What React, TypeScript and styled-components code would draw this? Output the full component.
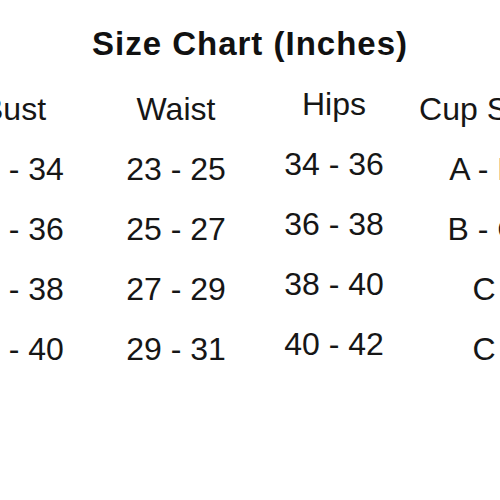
import React from "react";
import styled, { createGlobalStyle } from "styled-components";

const GlobalStyle = createGlobalStyle`
  html, body {
    margin: 0;
    padding: 0;
    background: #ffffff;
    overflow: hidden;
  }
  body {
    font-family: "Liberation Sans", Arial, sans-serif;
    color: #161616;
  }
`;

const Page = styled.div`
  width: 500px;
  height: 500px;
  display: flex;
  flex-direction: column;
  align-items: flex-start;
`;

const Title = styled.h1`
  align-self: stretch;
  margin: 24px 0 0;
  font-size: 33px;
  line-height: 40px;
  font-weight: 700;
  letter-spacing: 1px;
  text-align: center;
  color: #111;
`;

const Columns = styled.div`
  display: flex;
  margin: 10px 0 0 -66px;
`;

const Column = styled.div<{ $width: number; $raised?: boolean }>`
  display: flex;
  flex-direction: column;
  width: ${(p) => p.$width}px;
  padding-top: ${(p) => (p.$raised ? 0 : 5)}px;
  text-align: center;
  white-space: nowrap;
`;

const Header = styled.div`
  height: 60px;
  line-height: 60px;
  font-size: 32px;
`;

const Cell = styled.div`
  height: 60px;
  line-height: 60px;
  font-size: 32px;
`;

type Col = { name: string; width: number; raised?: boolean; values: string[] };

const columns: Col[] = [
  { name: "Bust", width: 160, values: ["32 - 34", "34 - 36", "36 - 38", "38 - 40"] },
  { name: "Waist", width: 164, values: ["23 - 25", "25 - 27", "27 - 29", "29 - 31"] },
  { name: "Hips", width: 152, raised: true, values: ["34 - 36", "36 - 38", "38 - 40", "40 - 42"] },
  { name: "Cup Size", width: 148, values: ["A - B", "B - C", "C", "C"] },
];

export default function App() {
  return (
    <>
      <GlobalStyle />
      <Page>
        <Title>Size Chart (Inches)</Title>
        <Columns>
          {columns.map((c) => (
            <Column key={c.name} $width={c.width} $raised={c.raised}>
              <Header>{c.name}</Header>
              {c.values.map((v, i) => (
                <Cell key={i}>{v}</Cell>
              ))}
            </Column>
          ))}
        </Columns>
      </Page>
    </>
  );
}
